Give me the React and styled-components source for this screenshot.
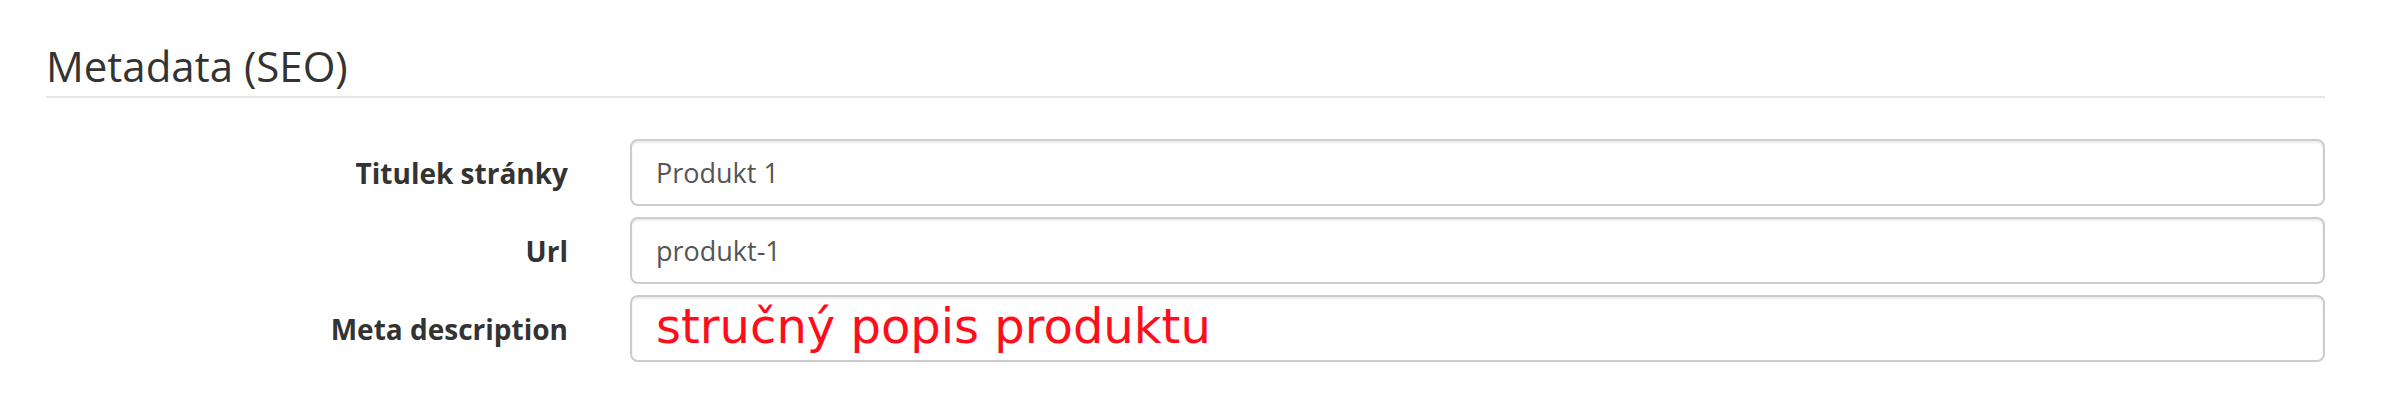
import React from 'react';
import styled, { createGlobalStyle } from 'styled-components';

const GlobalStyle = createGlobalStyle`
  html, body {
    margin: 0;
    padding: 0;
    background: #ffffff;
  }
  body {
    font-family: "Open Sans", "DejaVu Sans", sans-serif;
    color: #333333;
  }
  * {
    box-sizing: border-box;
  }
`;

const Page = styled.div`
  width: 2392px;
  height: 418px;
  padding: 36px 67px 0 46px;
`;

const Fieldset = styled.fieldset`
  margin: 0;
  padding: 0;
  border: 0;
  min-width: 0;
`;

const Legend = styled.legend`
  display: block;
  width: 100%;
  padding: 0;
  margin: 0 0 41px;
  font-size: 42px;
  line-height: 60px;
  font-weight: 400;
  color: #333333;
  border-bottom: 2px solid #e5e5e5;
`;

const FormRow = styled.div`
  display: grid;
  grid-template-columns: 522px 1fr;
  column-gap: 62px;
  margin-bottom: 11px;
`;

const Label = styled.label`
  padding-top: 14px;
  text-align: right;
  font-size: 28px;
  line-height: 40px;
  font-weight: 700;
  color: #333333;
`;

const Input = styled.input`
  display: block;
  width: 100%;
  height: 67px;
  margin: 0;
  padding: ${(p) => (p.$annotation ? '0 24px 5px' : '0 24px')};
  font-family: ${(p) => (p.$annotation ? '"DejaVu Sans", Verdana, sans-serif' : '"Open Sans", sans-serif')};
  font-size: ${(p) => (p.$annotation ? '48px' : '27px')};
  color: ${(p) => (p.$annotation ? '#ff0d1b' : '#555555')};
  background: #ffffff;
  border: 2px solid #cccccc;
  border-radius: 8px;
  box-shadow: inset 0 2px 2px rgba(0, 0, 0, 0.075);
  outline: none;
`;

const fields = [
  { id: 'title', label: 'Titulek stránky', value: 'Produkt 1' },
  { id: 'url', label: 'Url', value: 'produkt-1' },
  { id: 'description', label: 'Meta description', value: 'stručný popis produktu', annotation: true },
];

export default function App() {
  return (
    <Page>
      <GlobalStyle />
      <Fieldset>
        <Legend>Metadata (SEO)</Legend>
        {fields.map((f) => (
          <FormRow key={f.id}>
            <Label htmlFor={f.id}>{f.label}</Label>
            <Input id={f.id} type="text" readOnly value={f.value} $annotation={f.annotation} />
          </FormRow>
        ))}
      </Fieldset>
    </Page>
  );
}
